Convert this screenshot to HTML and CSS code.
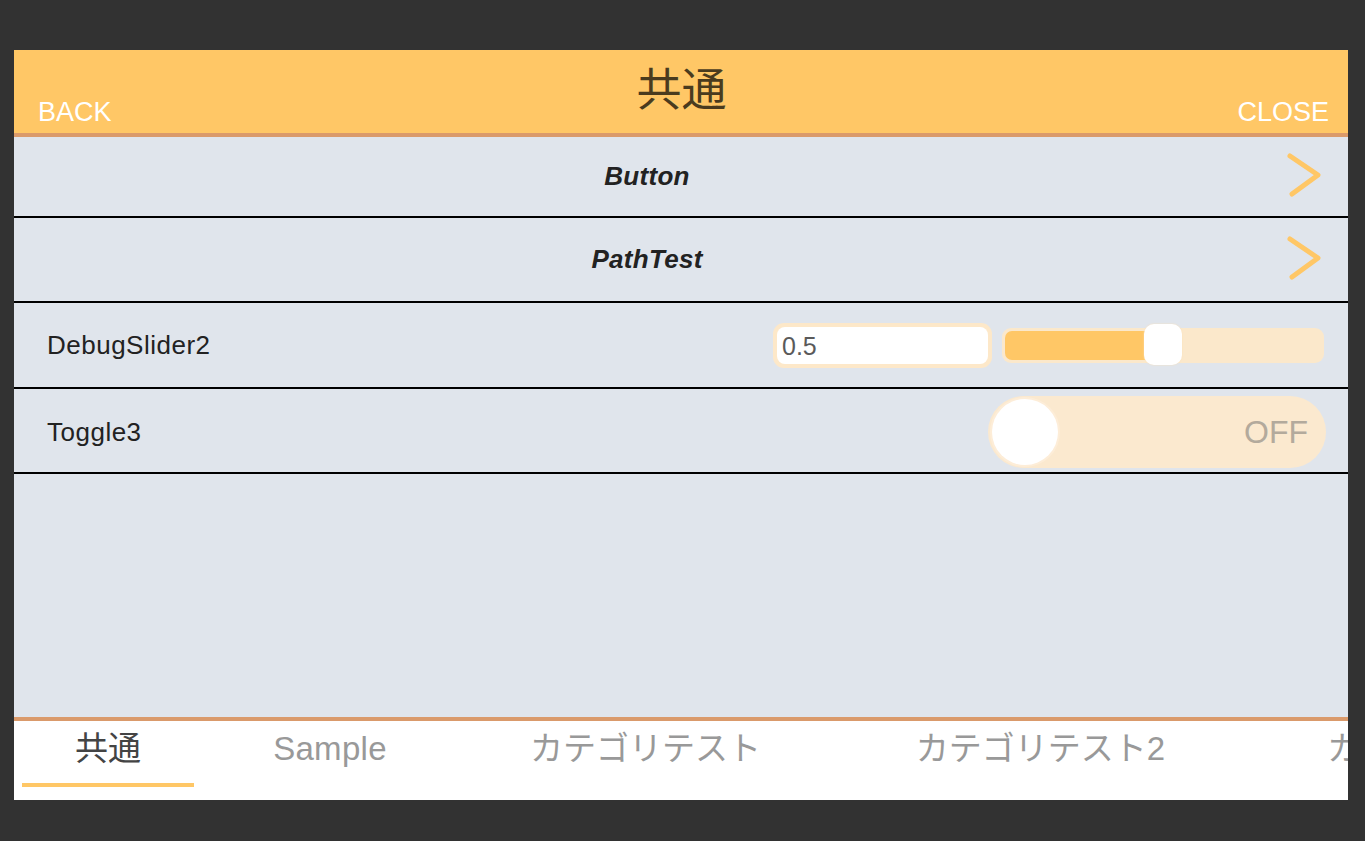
FILE: index.html
```html
<!DOCTYPE html>
<html lang="ja">
<head>
<meta charset="utf-8">
<title>共通</title>
<link rel="stylesheet" href="styles.css">
</head>
<body>
<div class="panel">
  <header class="header">
    <div class="header-btn header-back">BACK</div>
    <div class="header-title">共通</div>
    <div class="header-btn header-close">CLOSE</div>
  </header>
  <main class="list">
    <div class="row row-nav row-first">
      <div class="nav-label">Button</div>
      <div class="nav-arrow">
        <svg width="68" height="48" viewBox="0 0 68 48"><path d="M10 3 L38 22 L12 41" fill="none" stroke="#FFC766" stroke-width="5" stroke-linecap="round" stroke-linejoin="round"/></svg>
      </div>
    </div>
    <div class="row row-nav">
      <div class="nav-label">PathTest</div>
      <div class="nav-arrow">
        <svg width="68" height="48" viewBox="0 0 68 48"><path d="M10 3 L38 22 L12 41" fill="none" stroke="#FFC766" stroke-width="5" stroke-linecap="round" stroke-linejoin="round"/></svg>
      </div>
    </div>
    <div class="row row-setting">
      <div class="setting-label">DebugSlider2</div>
      <div class="slider-controls">
        <div class="num-input"><div class="num-input-inner">0.5</div></div>
        <div class="slider">
          <div class="slider-fill" style="width: 50%"></div>
          <div class="slider-handle" style="left: 50%"></div>
        </div>
      </div>
    </div>
    <div class="row row-setting row-toggle">
      <div class="setting-label">Toggle3</div>
      <div class="toggle">
        <div class="toggle-knob"></div>
        <div class="toggle-text">OFF</div>
      </div>
    </div>
  </main>
  <nav class="tabs">
    <div class="tab tab-1 tab-active">共通</div>
    <div class="tab tab-2">Sample</div>
    <div class="tab tab-3">カテゴリテスト</div>
    <div class="tab tab-4">カテゴリテスト2</div>
    <div class="tab tab-5">カテゴリテスト3</div>
  </nav>
</div>
</body>
</html>
```
FILE: styles.css
```css
* { box-sizing: border-box; }
html, body { margin: 0; padding: 0; }
body {
  background: #323232;
  width: 1365px;
  height: 841px;
  overflow: hidden;
  font-family: "Liberation Sans", "Noto Sans CJK JP", sans-serif;
}
.panel {
  margin: 50px 0 0 14px;
  width: 1334px;
  height: 750px;
  display: flex;
  flex-direction: column;
  background: #E0E5EC;
  overflow: hidden;
}
.header {
  height: 87px;
  flex: none;
  background: #FFC766;
  border-bottom: 4px solid #DA9A6B;
  display: grid;
  grid-template-columns: 1fr auto 1fr;
  padding: 0 19px 0 20px;
}
.header-btn {
  align-self: end;
  color: #fff;
  font-size: 27px;
  line-height: 30px;
  padding-bottom: 6px;
}
.header-back { padding-left: 4px; }
.header-close { justify-self: end; }
.header-title {
  align-self: start;
  margin-top: 14px;
  font-family: "Noto Sans CJK JP", sans-serif;
  font-size: 45px;
  line-height: 45px;
  color: #4A3B1E;
}
.list {
  flex: 1;
  display: flex;
  flex-direction: column;
}
.row {
  flex: none;
  display: flex;
  align-items: center;
  height: 85px;
  border-bottom: 2px solid #000;
}
.row-first { height: 81px; }
.row-setting { height: 86px; }
.row-toggle { height: 85px; }
.nav-label {
  flex: 1;
  text-align: center;
  font-weight: bold;
  font-style: italic;
  font-size: 26px;
  letter-spacing: 0.3px;
  color: #222;
}
.nav-arrow {
  width: 68px;
  height: 48px;
  flex: none;
}
.nav-arrow svg { display: block; }
.setting-label {
  flex: 1;
  padding-left: 33px;
  font-size: 26px;
  letter-spacing: 0.5px;
  color: #222;
}
.row-toggle .setting-label { padding-top: 3px; }
.slider-controls {
  display: flex;
  align-items: center;
  gap: 10px;
  padding-right: 24px;
}
.num-input {
  width: 219px;
  height: 45px;
  padding: 4px;
  border-radius: 11px;
  background: #FDE8C9;
}
.num-input-inner {
  height: 100%;
  background: #fff;
  border-radius: 8px;
  padding-left: 5px;
  font-size: 25px;
  line-height: 39px;
  color: #5a5a5a;
}
.slider {
  position: relative;
  width: 322px;
  height: 35px;
  background: #FBE8CB;
  border-radius: 9px;
  padding: 3px;
}
.slider-fill {
  height: 100%;
  background: #FFC766;
  border-radius: 7px;
}
.slider-handle {
  position: absolute;
  top: -4px;
  width: 38px;
  height: 41px;
  margin-left: -19px;
  background: #fff;
  border-radius: 10px;
  box-shadow: 0 0 2px #FBE0B8;
}
.toggle {
  position: relative;
  width: 338px;
  height: 72px;
  margin-right: 22px;
  margin-top: 3px;
  border-radius: 36px;
  background: #FBE9CF;
  display: flex;
  align-items: center;
  justify-content: space-between;
  padding: 0 18px 0 4px;
}
.toggle-knob {
  width: 66px;
  height: 66px;
  border-radius: 50%;
  background: #fff;
  box-shadow: 0 0 0 2px #FDEDD8;
}
.toggle-text {
  font-size: 32px;
  color: #B3AA9C;
}
.tabs {
  flex: none;
  height: 83px;
  background: #fff;
  border-top: 4px solid #DA9A6B;
  display: flex;
  padding-left: 8px;
  white-space: nowrap;
}
.tab {
  flex: none;
  height: 66px;
  padding-top: 11px;
  text-align: center;
  font-size: 33px;
  line-height: 33px;
  color: #999;
  border-bottom: 4px solid transparent;
}
.tab-2 { letter-spacing: 0.3px; }
.tab-active {
  color: #444;
  border-bottom-color: #FFC766;
}
.tab-1 { width: 172px; }
.tab-2 { width: 272px; }
.tab-3 { width: 359px; }
.tab-4 { width: 431px; }
.tab-5 { width: 400px; text-align: left; padding-left: 71px; }
```
